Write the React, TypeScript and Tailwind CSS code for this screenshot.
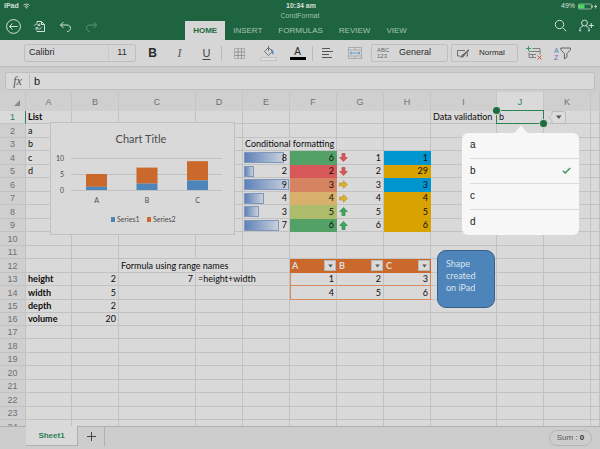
import type { ReactNode } from "react";
import clsx from "clsx";

const columns = [
    { name: "A", width: "w-[46px]" },
    { name: "B", width: "w-[47px]" },
    { name: "C", width: "w-[77px]" },
    { name: "D", width: "w-[47px]" },
    { name: "E", width: "w-[47px]" },
    { name: "F", width: "w-[47px]" },
    { name: "G", width: "w-[47px]" },
    { name: "H", width: "w-[47px]" },
    { name: "I", width: "w-[66px]" },
    { name: "J", width: "w-[47px]" },
    { name: "K", width: "w-[47px]" },
    { name: "", width: "" },
];

type Cell = {
    text?: ReactNode;
    bold?: boolean;
    right?: boolean;
    span?: number;
    bg?: string;
    bar?: number;
    arrow?: "up" | "down" | "side";
    filter?: boolean;
    body?: boolean;
};

const cells: Record<string, Cell> = {
    A1: { text: "List", bold: true },
    A2: { text: "a" },
    A3: { text: "b" },
    A4: { text: "c" },
    A5: { text: "d" },
    I1: { text: "Data validation" },
    J1: { text: "b" },
    E3: { text: "Conditional formatting", span: 2 },
    C12: { text: "Formula using range names", span: 2 },
    A13: { text: "height", bold: true },
    A14: { text: "width", bold: true },
    A15: { text: "depth", bold: true },
    A16: { text: "volume", bold: true },
    B13: { text: 2, right: true },
    B14: { text: 5, right: true },
    B15: { text: 2, right: true },
    B16: { text: 20, right: true },
    C13: { text: 7, right: true },
    D13: { text: "=height+width", span: 2 },
    F12: { text: "A", filter: true },
    G12: { text: "B", filter: true },
    H12: { text: "C", filter: true },
    F13: { text: 1, right: true, body: true },
    G13: { text: 2, right: true, body: true },
    H13: { text: 3, right: true, body: true },
    F14: { text: 4, right: true, body: true },
    G14: { text: 5, right: true, body: true },
    H14: { text: 6, right: true, body: true },
};

const green = "bg-[#54a168]";
const blue = "bg-[#0096cf]";
const gold = "bg-[#d8a200]";

const formatted: [number, number, string, number, "up" | "down" | "side", number, string][] = [
    [8, 6, green, 1, "down", 1, blue],
    [2, 2, "bg-[#d75858]", 2, "down", 29, gold],
    [9, 3, "bg-[#d68362]", 3, "side", 3, blue],
    [4, 4, "bg-[#d7b16c]", 4, "side", 4, gold],
    [3, 5, "bg-[#adbb6d]", 5, "up", 5, gold],
    [7, 6, green, 6, "up", 6, gold],
];

formatted.forEach(([e, f, fBg, g, arrow, h, hBg], i) => {
    const row = i + 4;
    cells["E" + row] = { text: e, right: true, bar: e / 9 };
    cells["F" + row] = { text: f, right: true, bg: fBg };
    cells["G" + row] = { text: g, right: true, arrow };
    cells["H" + row] = { text: h, right: true, bg: hBg };
});

const arrows = {
    down: { d: "M3 .5h3v4h2.3L4.5 8.5.7 4.5H3z", fill: "#d85a58", stroke: "#b84845" },
    up: { d: "M3 8.5h3v-4h2.3L4.5.5.7 4.5H3z", fill: "#3fa55f", stroke: "#2f8a4c" },
    side: { d: "M.5 3v3h4v2.3L8.5 4.5 4.5.7V3z", fill: "#dcb233", stroke: "#b8922a" },
};

function Arrow({ kind }: { kind: "up" | "down" | "side" }) {
    const a = arrows[kind];
    return (
        <svg viewBox="0 0 9 9" className="w-[9px] h-[9px]">
            <path d={a.d} fill={a.fill} stroke={a.stroke} strokeWidth=".7" />
        </svg>
    );
}

function Caret() {
    return (
        <svg viewBox="0 0 6 4" className="w-[5px] h-[4px]">
            <path d="M.3.3h5.4L3 3.8z" fill="#555" />
        </svg>
    );
}

function CellContent({ cell }: { cell: Cell }) {
    if (cell.filter) {
        return (
            <div className="flex items-center justify-between pl-0.5">
                {cell.text}
                <button aria-label={`Filter ${cell.text}`} className="w-3 h-[11px] flex items-center justify-center bg-[#dadada] border border-[#b9b9b9]">
                    <Caret />
                </button>
            </div>
        );
    }
    if (cell.bar) {
        return (
            <div className="grid items-center">
                <div
                    className="[grid-area:1/1] h-[11px] ml-px border border-[#7f97be] bg-linear-to-r from-[#5f82b8] to-[#c9d0db]"
                    style={{ width: `${cell.bar * 97}%` }}
                />
                <span className="[grid-area:1/1] text-right pr-0.5">{cell.text}</span>
            </div>
        );
    }
    if (cell.arrow) {
        return (
            <div className="flex items-center justify-between pl-0.5 pr-0.5">
                <Arrow kind={cell.arrow} />
                {cell.text}
            </div>
        );
    }
    return <div className="px-0.5">{cell.text}</div>;
}

function Sheet() {
    return (
        <table className="w-full table-fixed border-separate border-spacing-0 text-[#0c0c0c] font-[Lato,sans-serif] text-[9px] leading-3">
            <colgroup>
                <col className="w-[26px]" />
                {columns.map((c, i) => (
                    <col key={i} className={c.width} />
                ))}
            </colgroup>
            <thead className="font-['Liberation_Sans',sans-serif] text-[9px] text-[#707070]">
                <tr className="h-[19px] bg-[#cfcfcf]">
                    <th className="p-0 border-r border-[#c6c6c6]">
                        <svg viewBox="0 0 6 6" className="w-1.5 h-1.5 ml-3.5 mt-0.5">
                            <path d="M6 0v6H0z" fill="#8a8a8a" />
                        </svg>
                    </th>
                    {columns.map((c, i) => (
                        <th
                            key={i}
                            className={clsx("p-0 font-normal border-r border-[#c6c6c6]", c.name === "J" && "bg-[#dadada] text-[#2d8154]")}
                        >
                            {c.name}
                        </th>
                    ))}
                </tr>
            </thead>
            <tbody>
                {Array.from({ length: 24 }, (_, i) => i + 1).map((row) => {
                    let skip = 0;
                    return (
                        <tr key={row} className={row % 2 === 1 || row === 16 ? "h-[13px]" : "h-[14px]"}>
                            <th
                                className={clsx(
                                    "p-0 font-normal text-[9px] font-['Liberation_Sans',sans-serif] border-r border-b border-b-[#c2c2c2]",
                                    row === 1 ? "bg-[#dadada] text-[#2d8154] border-r-[#2d8154]" : "bg-[#cfcfcf] text-[#707070] border-r-[#c2c2c2]"
                                )}
                            >
                                {row}
                            </th>
                            {columns.map((c, i) => {
                                if (skip > 0) {
                                    skip--;
                                    return null;
                                }
                                const cell = cells[c.name + row] ?? {};
                                if (cell.span) skip = cell.span - 1;
                                return (
                                    <td
                                        key={i}
                                        colSpan={cell.span}
                                        className={clsx(
                                            "p-0 whitespace-nowrap border-r border-b",
                                            cell.bold && "font-bold",
                                            cell.right && "text-right",
                                            cell.bg,
                                            cell.filter && "bg-[#ca692b] text-[#dedede] font-bold border-[#ca692b]",
                                            cell.body && "border-b-[#d58a5d]",
                                            cell.body && (c.name === "H" ? "border-r-[#d58a5d]" : "border-r-[#c2c2c2]"),
                                            cell.body && c.name === "F" && "border-l border-l-[#d58a5d]",
                                            cell.bg && "border-transparent",
                                            !cell.bg && !cell.filter && !cell.body && "border-[#c2c2c2]",
                                            c.name + row === "J1" && "relative"
                                        )}
                                    >
                                        <CellContent cell={cell} />
                                        {c.name + row === "J1" && <Validation />}
                                    </td>
                                );
                            })}
                        </tr>
                    );
                })}
            </tbody>
        </table>
    );
}

function Validation() {
    return (
        <>
            <div className="absolute -inset-px border border-[#2d8154]" />
            <div className="absolute -top-1 -left-1 w-[7px] h-[7px] rounded-full bg-[#1f6b40] ring-1 ring-[#c8d0cb]" />
            <div className="absolute -bottom-1 -right-1 w-[7px] h-[7px] rounded-full bg-[#1f6b40] ring-1 ring-[#c8d0cb]" />
            <button aria-label="Show list" className="absolute top-0 left-[51px] w-[18px] h-[13px]">
                <svg viewBox="0 0 18 13" className="w-full h-full">
                    <path d="M4 .5h11.5a2 2 0 0 1 2 2v8a2 2 0 0 1-2 2H4V9.500L.7 6.500 4 3.500z" fill="#dcdcdc" stroke="#b4b4b4" strokeWidth=".8" />
                    <path d="M8 4.500h5.600l-2.800 3.600z" fill="#555" />
                </svg>
            </button>
            <div className="absolute z-10 top-[14px] -left-[35px] w-[117px] font-['Liberation_Sans',sans-serif] text-[10px] text-[#222]">
                <svg viewBox="0 0 18 8" className="block mx-auto w-[18px] h-2">
                    <path d="M0 8c4 0 4-2 9-7.500C14 6 14 8 18 8z" fill="#f7f7f7" />
                </svg>
                <ul role="listbox" className="h-[102px] grid grid-rows-4 bg-[#f7f7f7] rounded-md pl-2">
                    {["a", "b", "c", "d"].map((item) => (
                        <li key={item} role="option" aria-selected={item === "b"} className="border-b border-[#dadada] last:border-0">
                            <button className="w-full h-full flex items-center justify-between pr-2 text-left">
                                {item}
                                {item === "b" && (
                                    <svg viewBox="0 0 9 7" className="w-[9px] h-[7px]">
                                        <path d="M1 3.800 3.200 6 8.200 1" fill="none" stroke="#3a9b5c" strokeWidth="1.500" />
                                    </svg>
                                )}
                            </button>
                        </li>
                    ))}
                </ul>
            </div>
        </>
    );
}

const series = [
    { name: "A", one: 1, total: 5 },
    { name: "B", one: 2, total: 7 },
    { name: "C", one: 3, total: 9 },
];

function Chart() {
    return (
        <svg viewBox="0 0 185 113" className="w-[185px] h-[113px] font-[Lato,sans-serif] text-[7px]" fill="#4c4c4c">
            <rect x=".5" y=".5" width="184" height="112" fill="#d9d9d9" stroke="#c0c0c0" />
            <text x="91" y="21" fontSize="11" textAnchor="middle">Chart Title</text>
            {[0, 5, 10].map((v) => (
                <g key={v}>
                    <path d={`M21 ${68.5 - v * 3.2}h151`} stroke="#c0c0c0" />
                    <text x="14" y={71 - v * 3.2} textAnchor="end">{v}</text>
                </g>
            ))}
            {series.map((s, i) => (
                <g key={s.name}>
                    <rect x={36 + i * 50.5} y={68 - s.total * 3.2} width="21" height={(s.total - s.one) * 3.2} fill="#ca692b" />
                    <rect x={36 + i * 50.5} y={68 - s.one * 3.2} width="21" height={s.one * 3.2} fill="#4d84b9" />
                    <text x={46.5 + i * 50.5} y="81" textAnchor="middle">{s.name}</text>
                </g>
            ))}
            <rect x="61" y="95" width="4" height="5" fill="#4d84b9" />
            <text x="67" y="100">Series1</text>
            <rect x="97" y="95" width="4" height="5" fill="#ca692b" />
            <text x="103" y="100">Series2</text>
        </svg>
    );
}

function Header() {
    return (
        <header className="bg-[#1f6440] text-[#d5e0d9]">
            <div className="h-3 grid grid-cols-3 items-center pl-1 pr-0.5 text-[7px] leading-3 font-bold">
                <div className="flex items-center gap-1">
                    iPad
                    <svg viewBox="0 0 8 6" className="w-[7px] h-[6px]" fill="none" stroke="currentColor">
                        <path d="M.5 2.200a5 5 0 0 1 7 0M1.900 3.700a3 3 0 0 1 4.200 0" strokeWidth="1" />
                        <circle cx="4" cy="5" r=".5" fill="currentColor" />
                    </svg>
                </div>
                <div className="text-center">10:34 am</div>
                <div className="flex items-center justify-end gap-0.5 font-normal">
                    49%
                    <svg viewBox="0 0 21 7" className="w-[21px] h-[7px]">
                        <rect x="1.500" y="1" width="13" height="5" rx="1" fill="none" stroke="currentColor" strokeWidth=".6" />
                        <rect x="2" y="1.500" width="5.500" height="4" fill="#4bd964" />
                        <path d="M15.300 2.500v2" stroke="currentColor" />
                        <path d="M19.300.8 17 4h1.500l-.7 2.400L20.200 3h-1.500z" fill="currentColor" />
                    </svg>
                </div>
            </div>
            <div className="h-[7px] text-center text-[7px] leading-[7px] text-[#9dc0ab]">CondFormat</div>
            <div className="h-[21px] grid grid-cols-[1fr_auto_1fr]">
                <div className="flex items-center self-start pl-1.5 gap-3">
                    <button aria-label="Back">
                        <svg viewBox="0 0 15 15" className="block w-[15px] h-[15px]" fill="none" stroke="currentColor" strokeWidth="1">
                            <circle cx="7.500" cy="7.500" r="6.900" />
                            <path d="M11.500 7.500h-8M6.500 4.500l-3 3 3 3" />
                        </svg>
                    </button>
                    <button aria-label="Save">
                        <svg viewBox="0 0 13 13" className="block w-[13px] h-[13px]" fill="none" stroke="currentColor" strokeWidth="1">
                            <path d="M4 3V1.500h4.500l3 3v7H4V10.500M8.500 1.500v3h3" />
                            <path d="M1 6C1.500 3.800 5 3.300 6.500 5.300M6.800 3.300v2.300H4.600M8.800 6.800c-.5 2.500-4 3-5.500 1M3 10V7.600h2.300" strokeWidth=".9" />
                        </svg>
                    </button>
                    <button aria-label="Undo">
                        <svg viewBox="0 0 13 12" className="block ml-px w-[13px] h-3" fill="none" stroke="currentColor" strokeWidth="1">
                            <path d="M4.500 1 1.500 4l3 3M1.500 4H8c2 0 3.500 1.300 3.500 3.300S10 10.500 8 10.500" />
                        </svg>
                    </button>
                    <button aria-label="Redo" className="text-[#5c9575]">
                        <svg viewBox="0 0 13 12" className="block ml-px w-[13px] h-3" fill="none" stroke="currentColor" strokeWidth="1">
                            <path d="M8.500 1l3 3-3 3M11.500 4H5C3 4 1.500 5.300 1.500 7.300S3 10.500 5 10.500" />
                        </svg>
                    </button>
                </div>
                <nav className="self-end flex h-[19px] text-[8px] text-[#a5c4b1]">
                    <button className="px-2 bg-[#d6d6d6] text-[#1f6b40] font-bold">HOME</button>
                    <button className="px-2">INSERT</button>
                    <button className="px-2">FORMULAS</button>
                    <button className="px-2">REVIEW</button>
                    <button className="px-2">VIEW</button>
                </nav>
                <div className="flex items-center justify-end self-start gap-3 pr-1.5">
                    <button aria-label="Search">
                        <svg viewBox="0 0 13 13" className="block w-[13px] h-[13px]" fill="none" stroke="currentColor" strokeWidth="1">
                            <circle cx="5.500" cy="5.500" r="4.200" />
                            <path d="M8.600 8.600 12.300 12.300" />
                        </svg>
                    </button>
                    <button aria-label="Share">
                        <svg viewBox="0 0 15 13" className="block w-[15px] h-[13px]" fill="none" stroke="currentColor" strokeWidth="1">
                            <circle cx="5.500" cy="4" r="2.900" />
                            <path d="M.7 11.800c0-3 1.500-4 3.200-4.700M10.300 11.800c0-3-1.500-4-3.200-4.700M.2 11.800h2M8.800 11.800h2M12.300 4v5M9.800 6.500h5" />
                        </svg>
                    </button>
                </div>
            </div>
        </header>
    );
}

function Tool({ label, width, children }: { label: string; width: string; children: ReactNode }) {
    return (
        <button aria-label={label} className={clsx("h-full flex items-center justify-center shrink-0", width)}>
            {children}
        </button>
    );
}

function Toolbar() {
    return (
        <div className="h-[27px] flex items-center pl-6 bg-[#d6d6d6] border-b border-[#bdbdbd] text-[#2a2a2a]">
            <div className="w-[112px] h-[18px] shrink-0 flex items-center border border-[#bfbfbf] rounded-xs text-[9px]">
                <button className="flex-1 h-full pl-1 text-left border-r border-[#c9c9c9]">Calibri</button>
                <button className="w-[26px] h-full">11</button>
            </div>
            <div className="ml-[3px] h-full flex">
                <Tool label="Bold" width="w-[27px]">
                    <span className="text-xs font-bold">B</span>
                </Tool>
                <Tool label="Italic" width="w-[27px]">
                    <span className="text-xs italic text-[#555] font-['Liberation_Serif',serif]">I</span>
                </Tool>
                <Tool label="Underline" width="w-[27px]">
                    <span className="text-[11px] underline underline-offset-2 text-[#444]">U</span>
                </Tool>
            </div>
            <div className="ml-px w-px h-[15px] bg-[#b9b9b9]" />
            <div className="ml-[3px] h-full flex">
                <Tool label="Borders" width="w-[29px]">
                    <svg viewBox="0 0 11 11" className="w-[11px] h-[11px]" fill="none" stroke="#888">
                        <path d="M.5.5h10v10H.5z" strokeDasharray="1 1" />
                        <path d="M4 .5v10M7.500.5v10M.5 4h10M.5 7.500h10" strokeWidth=".8" />
                    </svg>
                </Tool>
                <Tool label="Fill colour" width="w-[29px]">
                    <svg viewBox="0 0 17 15" className="w-[17px] h-[15px]" fill="none">
                        <path d="M8.500 1.500 4.500 5.500l4 4 4-4zM8.500 0v5" stroke="#666" strokeWidth=".9" />
                        <path d="M11 3.500c2 .2 2.500 2 2.200 4.800-1.200-1-1-3-2.200-4.800z" fill="#3f83c4" stroke="#3f83c4" strokeWidth=".5" />
                        <path d="M.5 11.500h16v3H.5z" stroke="#bcbcbc" strokeWidth=".8" fill="#dedede" />
                    </svg>
                </Tool>
                <Tool label="Font colour" width="w-[29px]">
                    <span className="w-4 border-b-3 border-black text-[10px] leading-[11px]">A</span>
                </Tool>
            </div>
            <div className="w-px h-[15px] bg-[#b9b9b9]" />
            <div className="ml-px h-full flex">
                <Tool label="Align" width="w-[27px]">
                    <svg viewBox="0 0 11 10" className="w-[11px] h-[10px]" stroke="#555">
                        <path d="M0 .5h8M0 3.500h11M0 6.500h7M0 9.500h10" />
                    </svg>
                </Tool>
                <Tool label="Merge" width="w-[27px]">
                    <svg viewBox="0 0 14 12" className="w-3.5 h-3" fill="none">
                        <path d="M.5.5h13v11H.5zM.5 3h13M.5 9h13M7 .5V3M7 9v2.500" stroke="#999" strokeWidth=".7" />
                        <path d="M2 6h10M3.500 4.500 2 6l1.500 1.500M10.500 4.500 12 6l-1.500 1.500" stroke="#4a8ac6" strokeWidth=".8" />
                    </svg>
                </Tool>
            </div>
            <button className="ml-[3px] w-[77px] h-[18px] shrink-0 flex items-center pl-[5px] border border-[#bfbfbf] rounded-xs text-[9px]">
                <span className="w-[22px] text-left text-[6px] leading-[6px] text-[#666]">
                    ABC
                    <br />
                    123
                </span>
                General
            </button>
            <button className="ml-[3px] w-[67px] h-[18px] shrink-0 flex items-center pl-[5px] gap-2.5 border border-[#bfbfbf] rounded-xs text-[8px]">
                <svg viewBox="0 0 12 9" className="w-3 h-[9px]" fill="none" stroke="#555" strokeWidth=".8">
                    <path d="M8 1.500H.5v5.500H3M9 7h1.500V4" />
                    <path d="M11.500.8 6.500 5.200l.8.8 4.700-4.500zM6.500 5.200C5 5.200 5 7.500 3.500 7.800c1.500.6 3.500 0 3.800-1.800" fill="#777" />
                </svg>
                Normal
            </button>
            <Tool label="Insert and delete cells" width="w-8">
                <svg viewBox="0 0 17 14" className="w-[17px] h-3.5" fill="none">
                    <path d="M6.500 2.500h7.500v6M3 6.500v5h7M3 8.500h7M3 5.500h11M6.500 8.500v3" stroke="#777" strokeWidth=".9" />
                    <path d="M2.500 0v5M0 2.500h5" stroke="#3f9d5e" />
                    <path d="M11.500 9.500l4 4M15.500 9.500l-4 4" stroke="#d0523e" />
                </svg>
            </Tool>
            <Tool label="Sort and filter" width="w-6">
                <svg viewBox="0 0 17 13" className="w-[17px] h-[13px]" fill="none">
                    <text x="0" y="5.500" fontSize="7" fill="#4a82bd">A</text>
                    <text x="0" y="12.500" fontSize="7" fill="#7d62b0">Z</text>
                    <path d="M6.800 1h9.700v1.700L13 6.500v3.500l-2.600 2V6.500L6.800 2.700z" stroke="#555" strokeWidth=".9" />
                </svg>
            </Tool>
        </div>
    );
}

export default function App() {
    return (
        <div className="h-screen flex flex-col overflow-hidden bg-[#cdcdcd] font-['Liberation_Sans',sans-serif]">
            <Header />
            <Toolbar />
            <div className="px-[5px] pt-[5px] pb-0.5 shrink-0">
                <div className="h-[18px] flex items-center bg-[#d9d9d9] border border-[#bfbfbf] rounded-xs">
                    <label htmlFor="formula" className="w-6 h-3.5 border-r border-[#bdbdbd] text-center italic text-xs leading-[14px] text-[#555] font-['Liberation_Serif',serif]">
                        fx
                    </label>
                    <input id="formula" defaultValue="b" className="flex-1 min-w-0 pl-1 text-[11px] leading-4 text-[#222] bg-transparent outline-none" />
                </div>
            </div>

            <main className="relative flex-1 min-h-0 overflow-hidden bg-[#d9d9d9]">
                <Sheet />
                <div className="absolute left-[50px] top-[30px]">
                    <Chart />
                </div>
                <div className="absolute left-[437px] top-[158px] w-[58px] h-[58px] rounded-[9px] border border-[#38618a] bg-[#4d84b9] pl-2 pt-[7px] text-[9px] leading-3 text-[#dbe4ed] font-[Lato,sans-serif]">
                    Shape
                    <br />
                    created
                    <br />
                    on iPad
                </div>
            </main>

            <footer className="h-[23px] shrink-0 flex items-start justify-between pl-[26px] pr-2 border-t border-[#b0b0b0] bg-[#cdcdcd]">
                <div className="flex h-[19px]">
                    <button className="w-[52px] -mt-px bg-[#d9d9d9] border-r border-b border-[#b0b0b0] text-[8px] font-bold text-[#2d8154]">Sheet1</button>
                    <button aria-label="Add sheet" className="w-[27px] border-r border-[#b0b0b0] flex items-center justify-center">
                        <svg viewBox="0 0 9 9" className="w-[9px] h-[9px]" stroke="#444">
                            <path d="M4.500 0v9M0 4.500h9" />
                        </svg>
                    </button>
                </div>
                <button className="self-center h-4 w-[43px] border border-[#b5b5b5] rounded-full text-[8px] text-[#555]">
                    Sum : <b className="text-[#333]">0</b>
                </button>
            </footer>
        </div>
    );
}
